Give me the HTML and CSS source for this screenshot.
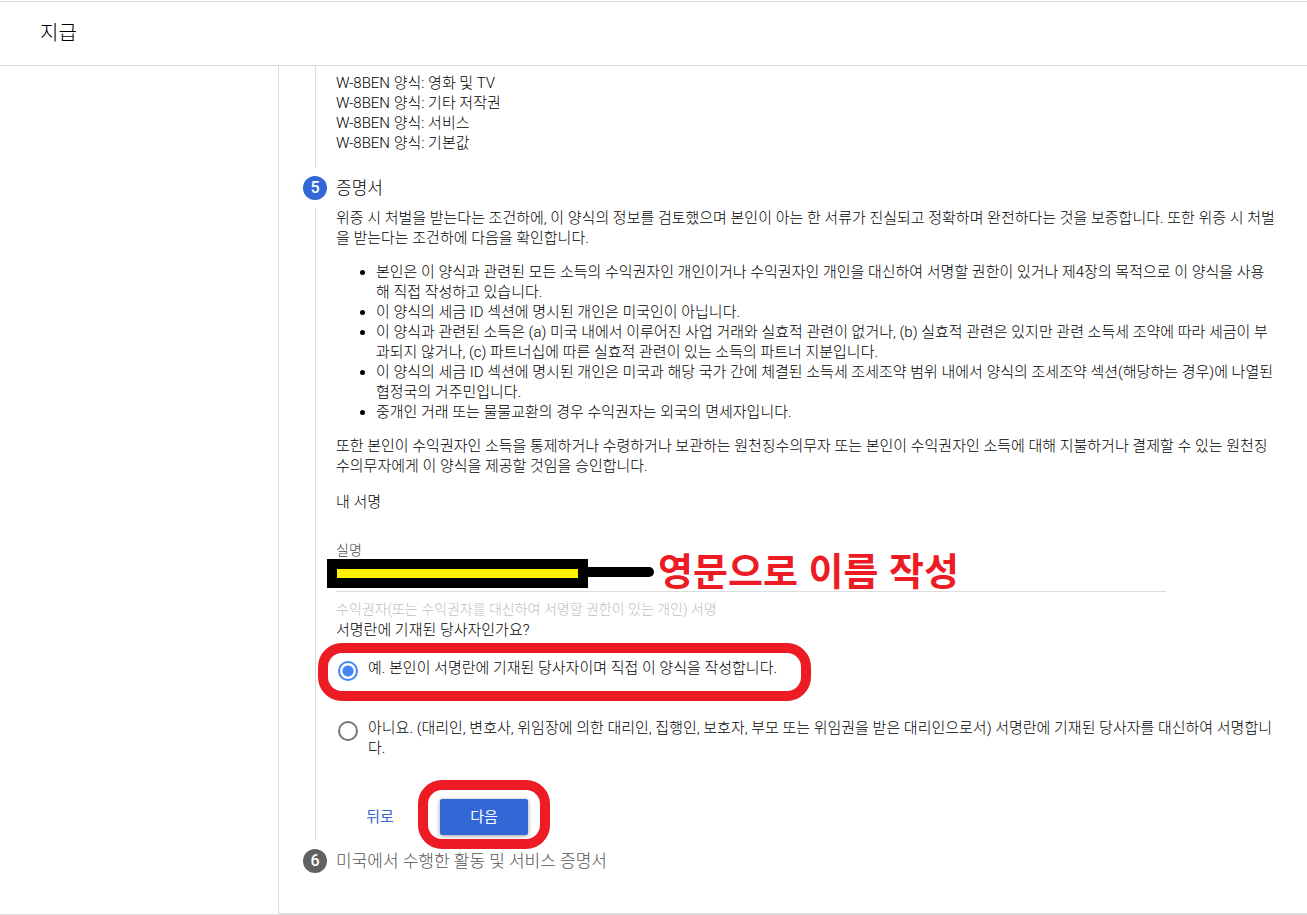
FILE: index.html
```
<!DOCTYPE html>
<html lang="ko">
  <head>
    <meta charset="UTF-8" />
    <meta name="viewport" content="width=device-width, initial-scale=1.0" />
    <title>지급</title>
    <link rel="stylesheet" href="styles.css">
  </head>
  <body>
    <header class="topbar">
      <h1>지급</h1>
    </header>

    <main class="page">
      <form class="card">
        <!-- Step 4 (end of the form list) -->
        <section class="step">
          <div class="rail"></div>
          <div class="step-body forms">
            <div>W-8BEN 양식: 영화 및 TV</div>
            <div>W-8BEN 양식: 기타 저작권</div>
            <div>W-8BEN 양식: 서비스</div>
            <div>W-8BEN 양식: 기본값</div>
          </div>
        </section>

        <!-- Step 5 -->
        <div class="step-head">
          <span class="badge active">5</span>
          <h2>증명서</h2>
        </div>
        <section class="step">
          <div class="rail"></div>
          <div class="step-body">
            <p>위증 시 처벌을 받는다는 조건하에, 이 양식의 정보를 검토했으며 본인이 아는 한 서류가 진실되고 정확하며 완전하다는 것을 보증합니다. 또한 위증 시 처벌을 받는다는 조건하에 다음을 확인합니다.</p>
            <ul>
              <li>본인은 이 양식과 관련된 모든 소득의 수익권자인 개인이거나 수익권자인 개인을 대신하여 서명할 권한이 있거나 제4장의 목적으로 이 양식을 사용해 직접 작성하고 있습니다.</li>
              <li>이 양식의 세금 ID 섹션에 명시된 개인은 미국인이 아닙니다.</li>
              <li>이 양식과 관련된 소득은 (a) 미국 내에서 이루어진 사업 거래와 실효적 관련이 없거나, (b) 실효적 관련은 있지만 관련 소득세 조약에 따라 세금이 부과되지 않거나, (c) 파트너십에 따른 실효적 관련이 있는 소득의 파트너 지분입니다.</li>
              <li>이 양식의 세금 ID 섹션에 명시된 개인은 미국과 해당 국가 간에 체결된 소득세 조세조약 범위 내에서 양식의 조세조약 섹션(해당하는 경우)에 나열된 협정국의 거주민입니다.</li>
              <li>중개인 거래 또는 물물교환의 경우 수익권자는 외국의 면세자입니다.</li>
            </ul>
            <p>또한 본인이 수익권자인 소득을 통제하거나 수령하거나 보관하는 원천징수의무자 또는 본인이 수익권자인 소득에 대해 지불하거나 결제할 수 있는 원천징수의무자에게 이 양식을 제공할 것임을 승인합니다.</p>
            <h3>내 서명</h3>

            <div class="field">
              <label for="realName">실명</label>
              <input id="realName" type="text" />
              <div class="redact"></div>
              <div class="pointer"></div>
              <strong class="note">영문으로 이름 작성</strong>
            </div>
            <div class="hint">수익권자(또는 수익권자를 대신하여 서명할 권한이 있는 개인) 서명</div>

            <fieldset>
              <legend>서명란에 기재된 당사자인가요?</legend>
              <div class="option">
                <input type="radio" id="signerYes" name="signer" checked />
                <label for="signerYes">예. 본인이 서명란에 기재된 당사자이며 직접 이 양식을 작성합니다.</label>
                <div class="mark mark-option"></div>
              </div>
              <div class="option">
                <input type="radio" id="signerNo" name="signer" />
                <label for="signerNo">아니요. (대리인, 변호사, 위임장에 의한 대리인, 집행인, 보호자, 부모 또는 위임권을 받은 대리인으로서) 서명란에 기재된 당사자를 대신하여 서명합니다.</label>
              </div>
            </fieldset>

            <div class="actions">
              <button type="button" class="back">뒤로</button>
              <div class="next-wrap">
                <button type="button" class="next">다음</button>
                <div class="mark mark-next"></div>
              </div>
            </div>
          </div>
        </section>

        <!-- Step 6 -->
        <div class="step-head">
          <span class="badge">6</span>
          <h2 class="muted">미국에서 수행한 활동 및 서비스 증명서</h2>
        </div>
      </form>
    </main>
  </body>
</html>
```
FILE: styles.css
```
* {
  box-sizing: border-box;
}

body {
  margin: 0;
  min-height: 100vh;
  display: flex;
  flex-direction: column;
  background: #fff;
  color: #000;
  font-family: Roboto, "Noto Sans CJK KR", sans-serif;
  font-size: 15px;
  font-weight: 300;
  line-height: 20px;
  padding-top: 1px;
}

h1,
h2,
h3,
p {
  margin: 0;
  font-weight: 300;
}

.topbar {
  border-top: 1px solid #dcdcdc;
  border-bottom: 1px solid #dcdcdc;
  padding: 19px 40px 20px;
}

h1 {
  font-size: 20px;
  line-height: 24px;
}

.page {
  flex: 1;
  display: flex;
  padding-left: 278px;
  border-bottom: 1px solid #dcdcdc;
}

.card {
  flex: 1;
  border-left: 1px solid #dcdcdc;
  border-bottom: 1px solid #dcdcdc;
  border-bottom-left-radius: 3px;
  padding: 0 31px 0 24px;
}

.step {
  display: flex;
  gap: 20px;
}

.rail {
  flex: none;
  width: 1px;
  margin-left: 12px;
  background: #dcdcdc;
}

.step-body {
  flex: 1;
  word-break: break-all;
}

.forms {
  padding: 7px 0 15px;
}

.step-head {
  display: flex;
  align-items: center;
  gap: 9px;
  height: 40px;
}

.badge {
  width: 24px;
  height: 24px;
  border-radius: 50%;
  background: #616161;
  color: #fff;
  font-size: 16px;
  font-weight: 500;
  line-height: 24px;
  text-align: center;
}

.badge.active {
  background: #3367d6;
}

h2 {
  font-size: 17px;
  line-height: 24px;
}

.muted {
  color: #555;
}

ul {
  margin: 14px 0;
  padding-left: 40px;
}

h3 {
  margin-top: 16px;
  font-size: 15px;
}

.field {
  position: relative;
  margin: 28px 110px 0 0;
}

.field label {
  display: block;
  color: #444;
  font-size: 14px;
}

.field input {
  display: block;
  width: 100%;
  height: 32px;
  border: 0;
  border-bottom: 1px solid #dcdcdc;
  padding: 0;
  font: inherit;
  outline: none;
}

/* hides the signed name */
.redact {
  position: absolute;
  top: 19px;
  left: -9px;
  width: 261px;
  height: 29px;
  border: solid #000;
  border-width: 10px;
  background: #fff200;
}

.pointer {
  position: absolute;
  top: 27px;
  left: 250px;
  width: 68px;
  height: 10px;
  border-radius: 0 5px 5px 0;
  background: #000;
}

.note {
  position: absolute;
  top: 9px;
  left: 322px;
  color: #ed1c24;
  font-family: "Noto Sans CJK KR", sans-serif;
  font-size: 38px;
  font-weight: 700;
  line-height: 40px;
  white-space: nowrap;
}

.hint {
  margin-top: 7px;
  color: #c0c0c0;
  font-size: 14px;
}

fieldset {
  margin: 0;
  border: 0;
  padding: 0;
}

legend {
  padding: 1px 0 0;
}

.option {
  position: relative;
  display: flex;
  gap: 10px;
  margin-bottom: 37px;
  padding-left: 2px;
}

legend + .option {
  margin-top: 18px;
}

.option input {
  flex: none;
  appearance: none;
  width: 20px;
  height: 20px;
  margin: 3px 0 0;
  border: 2px solid #757575;
  border-radius: 50%;
  background: #fff;
}

.option input:checked {
  border-color: #4285f4;
  background: radial-gradient(#4285f4 5px, #fff 6px);
}

.mark {
  position: absolute;
  border: 10px solid #ed1c24;
  border-radius: 24px;
  pointer-events: none;
}

.mark-option {
  top: -15px;
  left: -18px;
  width: 493px;
  height: 58px;
}

.actions {
  display: flex;
  gap: 16px;
  padding: 4px 0 6px;
}

button {
  height: 36px;
  min-width: 88px;
  border: 0;
  border-radius: 2px;
  padding: 0 16px 4px;
  font-family: inherit;
  font-size: 15px;
  font-weight: 400;
  cursor: pointer;
}

.back {
  background: transparent;
  color: #3367d6;
}

.next-wrap {
  position: relative;
}

.next {
  background: #3367d6;
  color: #fff;
  box-shadow: 0 1px 4px rgba(0, 0, 0, 0.4);
}

.mark-next {
  top: -19px;
  left: -22px;
  width: 132px;
  height: 69px;
}
```
